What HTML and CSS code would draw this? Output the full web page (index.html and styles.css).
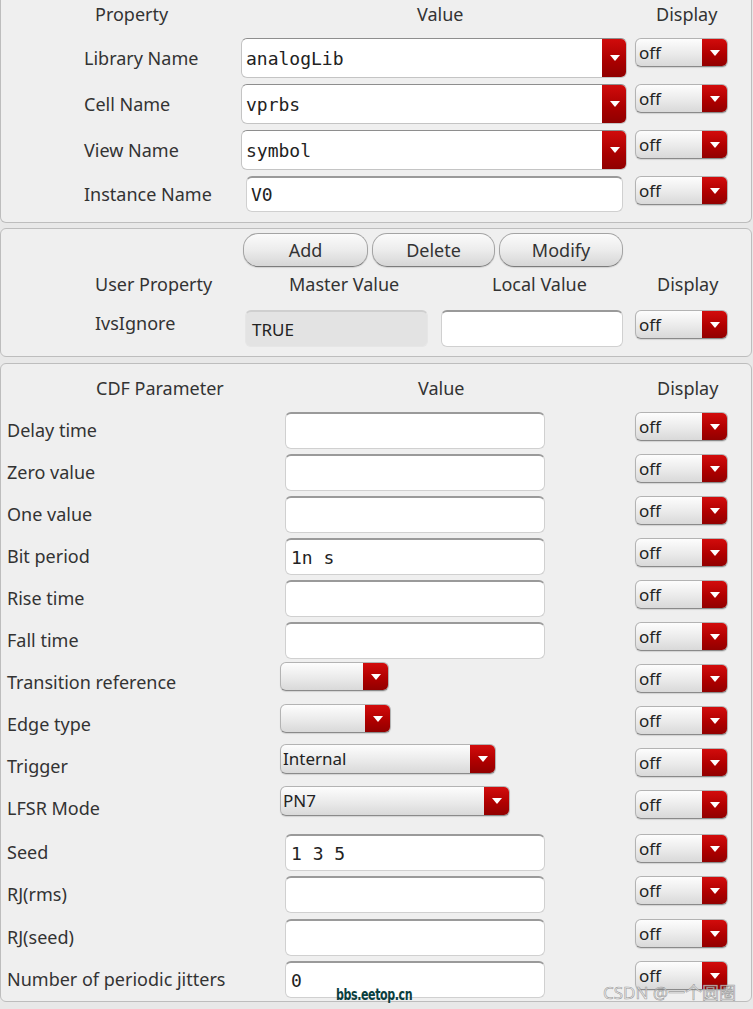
FILE: index.html
```html
<!DOCTYPE html>
<html>
<head>
<meta charset="utf-8">
<link rel="stylesheet" href="styles.css">
</head>
<body>
<div class="panel p1">
  <div class="hdr hdr1">
    <span class="h1-prop">Property</span>
    <span class="h1-val">Value</span>
    <span class="h-disp">Display</span>
  </div>
  <div class="rows1">
    <div class="row1">
      <span class="lbl1">Library Name</span>
      <div class="bigcombo"><span class="mono">analogLib</span><span class="redbtn"><i class="arrow"></i></span></div>
      <div class="disp"><span class="disp-txt">off</span><span class="redpart"><i class="arrow"></i></span></div>
    </div>
    <div class="row1">
      <span class="lbl1">Cell Name</span>
      <div class="bigcombo"><span class="mono">vprbs</span><span class="redbtn"><i class="arrow"></i></span></div>
      <div class="disp"><span class="disp-txt">off</span><span class="redpart"><i class="arrow"></i></span></div>
    </div>
    <div class="row1">
      <span class="lbl1">View Name</span>
      <div class="bigcombo"><span class="mono">symbol</span><span class="redbtn"><i class="arrow"></i></span></div>
      <div class="disp"><span class="disp-txt">off</span><span class="redpart"><i class="arrow"></i></span></div>
    </div>
    <div class="row1 row1-inst">
      <span class="lbl1">Instance Name</span>
      <div class="field inst-field"><span class="mono">V0</span></div>
      <div class="disp"><span class="disp-txt">off</span><span class="redpart"><i class="arrow"></i></span></div>
    </div>
  </div>
</div>

<div class="panel p2">
  <div class="btnrow">
    <button class="btn btn-add">Add</button>
    <button class="btn btn-del">Delete</button>
    <button class="btn btn-mod">Modify</button>
  </div>
  <div class="hdr hdr2">
    <span class="h2-up">User Property</span>
    <span class="h2-mv">Master Value</span>
    <span class="h2-lv">Local Value</span>
    <span class="h-disp">Display</span>
  </div>
  <div class="row2">
    <span class="lbl2">IvsIgnore</span>
    <div class="field ro-field"><span>TRUE</span></div>
    <div class="field local-field"></div>
    <div class="disp"><span class="disp-txt">off</span><span class="redpart"><i class="arrow"></i></span></div>
  </div>
</div>

<div class="panel p3">
  <div class="hdr hdr3">
    <span class="h3-cdf">CDF Parameter</span>
    <span class="h3-val">Value</span>
    <span class="h-disp">Display</span>
  </div>
  <div class="rows3">
    <div class="row3"><span class="lbl3">Delay time</span><div class="vcol"><div class="field f3"></div></div><div class="disp"><span class="disp-txt">off</span><span class="redpart"><i class="arrow"></i></span></div></div>
    <div class="row3"><span class="lbl3">Zero value</span><div class="vcol"><div class="field f3"></div></div><div class="disp"><span class="disp-txt">off</span><span class="redpart"><i class="arrow"></i></span></div></div>
    <div class="row3"><span class="lbl3">One value</span><div class="vcol"><div class="field f3"></div></div><div class="disp"><span class="disp-txt">off</span><span class="redpart"><i class="arrow"></i></span></div></div>
    <div class="row3"><span class="lbl3">Bit period</span><div class="vcol"><div class="field f3"><span class="mono">1n s</span></div></div><div class="disp"><span class="disp-txt">off</span><span class="redpart"><i class="arrow"></i></span></div></div>
    <div class="row3"><span class="lbl3">Rise time</span><div class="vcol"><div class="field f3"></div></div><div class="disp"><span class="disp-txt">off</span><span class="redpart"><i class="arrow"></i></span></div></div>
    <div class="row3"><span class="lbl3">Fall time</span><div class="vcol"><div class="field f3"></div></div><div class="disp"><span class="disp-txt">off</span><span class="redpart"><i class="arrow"></i></span></div></div>
    <div class="row3"><span class="lbl3">Transition reference</span><div class="vcol"><div class="scombo sc-tr"><span class="sc-txt"></span><span class="redpart"><i class="arrow"></i></span></div></div><div class="disp"><span class="disp-txt">off</span><span class="redpart"><i class="arrow"></i></span></div></div>
    <div class="row3"><span class="lbl3">Edge type</span><div class="vcol"><div class="scombo sc-edge"><span class="sc-txt"></span><span class="redpart"><i class="arrow"></i></span></div></div><div class="disp"><span class="disp-txt">off</span><span class="redpart"><i class="arrow"></i></span></div></div>
    <div class="row3"><span class="lbl3">Trigger</span><div class="vcol"><div class="scombo sc-trig"><span class="sc-txt">Internal</span><span class="redpart"><i class="arrow"></i></span></div></div><div class="disp"><span class="disp-txt">off</span><span class="redpart"><i class="arrow"></i></span></div></div>
    <div class="row3"><span class="lbl3">LFSR Mode</span><div class="vcol"><div class="scombo sc-lfsr"><span class="sc-txt">PN7</span><span class="redpart"><i class="arrow"></i></span></div></div><div class="disp"><span class="disp-txt">off</span><span class="redpart"><i class="arrow"></i></span></div></div>
    <div class="row3 row-seed"><span class="lbl3">Seed</span><div class="vcol"><div class="field f3"><span class="mono">1 3 5</span></div></div><div class="disp"><span class="disp-txt">off</span><span class="redpart"><i class="arrow"></i></span></div></div>
    <div class="row3"><span class="lbl3">RJ(rms)</span><div class="vcol"><div class="field f3"></div></div><div class="disp"><span class="disp-txt">off</span><span class="redpart"><i class="arrow"></i></span></div></div>
    <div class="row3 row-rjseed"><span class="lbl3">RJ(seed)</span><div class="vcol"><div class="field f3"></div></div><div class="disp"><span class="disp-txt">off</span><span class="redpart"><i class="arrow"></i></span></div></div>
    <div class="row3"><span class="lbl3">Number of periodic jitters</span><div class="vcol"><div class="field f3"><span class="mono">0</span></div></div><div class="disp"><span class="disp-txt">off</span><span class="redpart"><i class="arrow"></i></span></div></div>
  </div>
</div>

<div class="wm-eetop">bbs.eetop.cn</div>
<div class="wm-csdn">CSDN @一个圆圈</div>
</body>
</html>
```

FILE: styles.css
```css
* { box-sizing: border-box; }

html, body {
  margin: 0;
  padding: 0;
}

body {
  width: 753px;
  height: 1009px;
  overflow: hidden;
  position: relative;
  background: #e8e8e8;
  font-family: "Noto Sans", "Open Sans", sans-serif;
  font-size: 18px;
  color: #333333;
}

.mono {
  font-family: "DejaVu Sans Mono", "Liberation Mono", monospace;
  font-size: 18px;
  color: #222;
}

.panel {
  width: 752px;
  background: #efefef;
  border: 1px solid #bdbdbd;
  border-radius: 6px;
}

/* ---------- panel 1 ---------- */
.p1 {
  border-top: none;
  border-radius: 0 0 6px 6px;
  height: 223px;
}

.hdr {
  display: flex;
  white-space: nowrap;
}

.hdr1 {
  height: 30px;
  line-height: 28px;
}

.h1-prop { padding-left: 94px; width: 416px; }
.h1-val { width: 239px; }

.rows1 {
  display: flex;
  flex-direction: column;
  gap: 6px;
  padding-top: 8px;
}

.row1 {
  display: flex;
  align-items: flex-start;
  height: 40px;
}

.row1-inst { height: 36px; }

.lbl1 {
  width: 240px;
  padding-left: 83px;
  line-height: 40px;
  white-space: nowrap;
}

.row1-inst .lbl1 { line-height: 36px; }

.bigcombo {
  width: 386px;
  height: 40px;
  display: flex;
  align-items: center;
  background: #ffffff;
  border: 1px solid #c4c4c4;
  border-top-color: #8e8e8e;
  border-radius: 6px;
  padding-left: 4px;
  margin-right: 8px;
  overflow: hidden;
}

.bigcombo .mono { flex: 1; }

.redbtn {
  width: 25px;
  align-self: stretch;
  margin: -1px -1px -1px 0;
  background: linear-gradient(#d20c0c, #a80000 60%, #8e0000);
  border-radius: 0 6px 6px 0;
  display: flex;
  align-items: center;
  justify-content: center;
}

.arrow {
  display: block;
  width: 0;
  height: 0;
  border-left: 5px solid transparent;
  border-right: 5px solid transparent;
  border-top: 6px solid #ffffff;
}

.field {
  background: #ffffff;
  border: 1px solid #d0d0d0;
  border-top: 2px solid #9a9a9a;
  border-radius: 6px;
  display: flex;
  align-items: center;
}

.inst-field {
  width: 377px;
  height: 36px;
  margin-left: 5px;
  margin-right: 12px;
  padding-left: 4px;
}

.disp {
  width: 93px;
  height: 29px;
  display: flex;
  background: linear-gradient(#fdfdfd, #ececec 50%, #d9d9d9);
  border: 1px solid #b3b3b3;
  border-bottom-color: #8a8a8a;
  border-radius: 6px;
  overflow: hidden;
  box-shadow: 0 1px 1px rgba(0,0,0,0.12);
}

.disp-txt {
  flex: 1;
  padding-left: 3px;
  font-size: 17px;
  line-height: 27px;
  color: #222;
}

.redpart {
  width: 25px;
  background: linear-gradient(#d20c0c, #b00000 55%, #920000);
  display: flex;
  align-items: center;
  justify-content: center;
}

/* ---------- panel 2 ---------- */
.p2 {
  margin-top: 5px;
  height: 129px;
  padding-top: 4px;
}

.btnrow {
  display: flex;
  padding-left: 242px;
  height: 34px;
}

.btn {
  font-family: "Noto Sans", "Open Sans", sans-serif;
  font-size: 18px;
  color: #333;
  height: 34px;
  padding: 0;
  border: 1px solid #a4a4a4;
  border-bottom-color: #7c7c7c;
  border-radius: 15px;
  background: linear-gradient(#fbfbfb, #ececec 50%, #d6d6d6);
  box-shadow: 0 1px 1px rgba(0,0,0,0.12);
}

.btn-add { width: 125px; }
.btn-del { width: 123px; margin-left: 4px; }
.btn-mod { width: 124px; margin-left: 4px; }

.hdr2 {
  height: 34px;
  line-height: 34px;
}

.h2-up { padding-left: 94px; width: 288px; }
.h2-mv { width: 203px; }
.h2-lv { width: 165px; }

.row2 {
  display: flex;
  align-items: flex-start;
  margin-top: 9px;
  height: 37px;
}

.lbl2 {
  width: 244px;
  padding-left: 94px;
  line-height: 27px;
}

.ro-field {
  width: 183px;
  height: 37px;
  background: #e3e3e3;
  border-color: #e6e6e6;
  border-top-color: #cfcfcf;
  padding-left: 6px;
  margin-right: 13px;
  font-size: 17px;
  color: #222;
}

.local-field {
  width: 182px;
  height: 37px;
  margin-right: 12px;
}

/* ---------- panel 3 ---------- */
.p3 {
  margin-top: 6px;
  height: 639px;
}

.hdr3 {
  height: 46px;
  line-height: 48px;
}

.h3-cdf { padding-left: 95px; width: 417px; }
.h3-val { width: 239px; }

.row3 {
  display: flex;
  align-items: flex-start;
  height: 42px;
}

.row-seed { margin-top: 2px; }
.row-rjseed { margin-top: 1px; }

.lbl3 {
  width: 279px;
  padding-left: 6px;
  margin-top: 2px;
  line-height: 37px;
  white-space: nowrap;
}

.vcol {
  width: 355px;
}

.f3 {
  width: 260px;
  height: 37px;
  margin-top: 2px;
  margin-left: 5px;
  padding-left: 5px;
}

.row3 .disp { margin-top: 2px; }

.scombo {
  height: 29px;
  display: flex;
  background: linear-gradient(#fdfdfd, #ececec 50%, #d9d9d9);
  border: 1px solid #b3b3b3;
  border-bottom-color: #8a8a8a;
  border-radius: 6px;
  overflow: hidden;
  box-shadow: 0 1px 1px rgba(0,0,0,0.12);
}

.sc-txt {
  flex: 1;
  padding-left: 2px;
  font-size: 17px;
  line-height: 27px;
  color: #222;
}

.sc-tr { width: 109px; }
.sc-edge { width: 111px; }
.sc-trig { width: 216px; height: 30px; margin-top: -2px; }
.sc-lfsr { width: 230px; height: 30px; margin-top: -2px; }

/* ---------- watermarks ---------- */
.wm-eetop {
  position: absolute;
  left: 336px;
  top: 986px;
  font-family: "DejaVu Sans Condensed", "DejaVu Sans", sans-serif;
  font-weight: bold;
  font-size: 15px;
  letter-spacing: -0.5px;
  color: #0b3f3f;
  transform: scaleX(0.82);
  transform-origin: left center;
}

.wm-csdn {
  position: absolute;
  left: 603px;
  top: 979px;
  font-family: "Noto Sans", "Noto Sans CJK SC", sans-serif;
  font-size: 17px;
  color: rgba(235, 235, 235, 0.75);
  -webkit-text-stroke: 0.6px rgba(120, 120, 120, 0.7);
  white-space: nowrap;
}
```
